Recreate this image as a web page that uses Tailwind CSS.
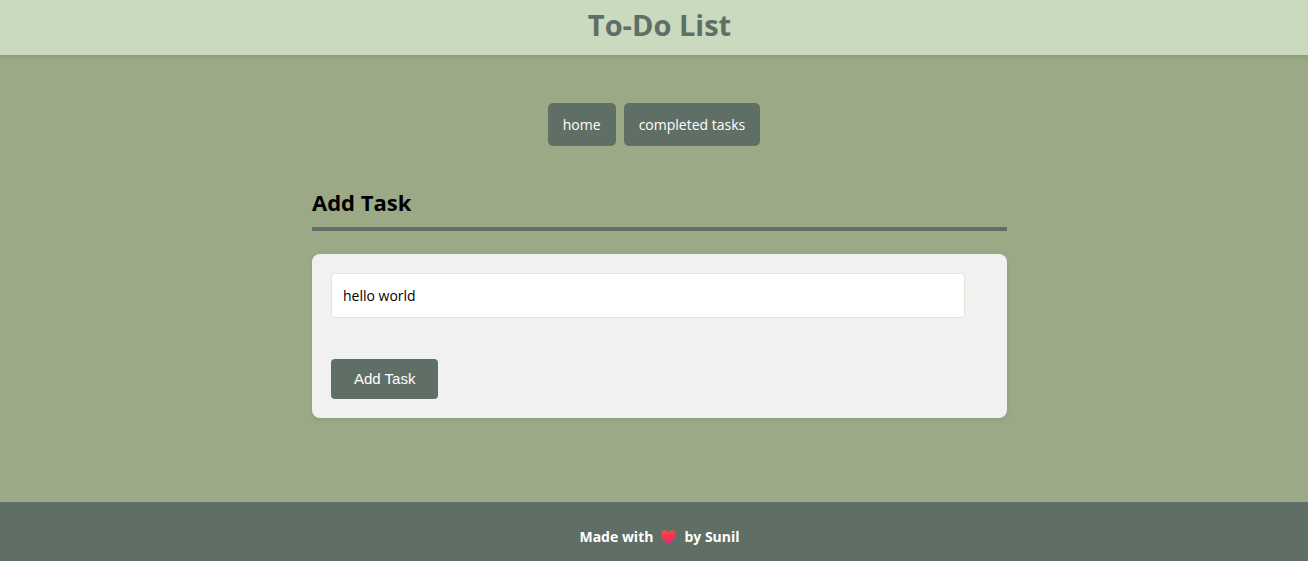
<!DOCTYPE html>
<html lang="en">
<head>
<meta charset="utf-8">
<meta name="viewport" content="width=device-width, initial-scale=1">
<title>To-Do List</title>
<script src="https://cdn.jsdelivr.net/npm/@tailwindcss/browser@4"></script>
</head>
<body class="flex min-h-screen flex-col bg-[#9ca986] font-['Open_Sans','Noto_Sans',sans-serif] text-black">
  <header class="bg-[#c9dabf] pt-[3px] pb-[9px] pl-[11px] text-center shadow-[0_2px_4px_rgba(0,0,0,0.1)]">
    <h1 class="text-[29px] leading-[43px] font-bold text-[#5f6f65]">To-Do List</h1>
  </header>

  <nav class="mt-12 flex justify-center gap-2 text-sm leading-[19px] text-white">
    <a href="#" class="rounded-[5px] bg-[#5f6f65] px-[15px] py-3">home</a>
    <a href="#" class="rounded-[5px] bg-[#5f6f65] px-[15px] py-3">completed tasks</a>
  </nav>

  <main class="flex w-full grow justify-center pt-10 pb-[84px] pl-[11px]">
    <section class="w-full max-w-[695px]">
      <h2 class="border-b-4 border-[#5f6f65] pb-2 text-[22px] leading-[33px] font-bold">Add Task</h2>
      <form class="mt-[23px] rounded-lg bg-[#f1f1f1] p-[19px] shadow-[0_2px_4px_rgba(0,0,0,0.08)]">
        <input type="text" value="hello world" aria-label="Task" class="block h-[45px] w-[calc(100%-23px)] rounded-[4px] border border-[#e8e3d3] bg-white px-[11px] text-sm">
        <button type="button" class="mt-[41px] block h-10 rounded-[4px] bg-[#5f6f65] px-[23px] font-['Liberation_Sans',sans-serif] text-[15px] text-white">Add Task</button>
      </form>
    </section>
  </main>

  <footer class="bg-[#5f6f65] pt-6 pb-[14px] pl-[11px] text-white">
    <p class="flex items-center justify-center gap-[7px] text-sm leading-[21px] font-bold">
      <span>Made with</span>
      <svg class="h-4 w-[17px]" viewBox="0 0 17 16" role="img" aria-label="love">
        <defs>
          <linearGradient id="heart" x1="0.3" y1="0" x2="0.5" y2="1">
            <stop offset="0" stop-color="#f8523f"/>
            <stop offset="0.45" stop-color="#f6354f"/>
            <stop offset="1" stop-color="#fb1c8b"/>
          </linearGradient>
        </defs>
        <path fill="url(#heart)" d="M8.5 3.3C7.6 1.9 6.3 1.2 4.9 1.2 2.7 1.2 1.2 3 1.2 5.3c0 3.4 3.8 6.8 6.5 9.2q.8.7 1.6 0c2.7-2.4 6.5-5.8 6.5-9.2 0-2.3-1.5-4.1-3.7-4.1-1.4 0-2.7.7-3.6 2.1Z"/>
      </svg>
      <span>by Sunil</span>
    </p>
  </footer>
</body>
</html>
